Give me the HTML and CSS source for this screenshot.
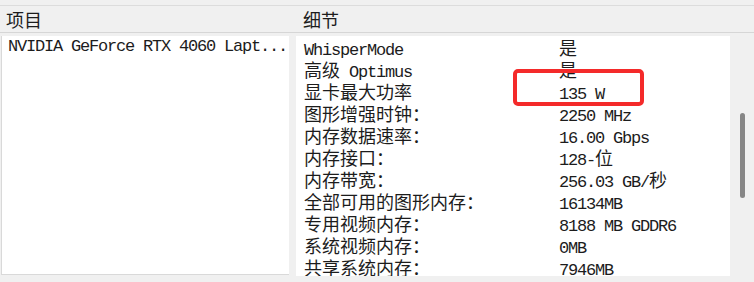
FILE: index.html
```html
<!DOCTYPE html>
<html lang="zh-CN">
<head>
    <meta charset="UTF-8">
    <title>显卡信息</title>
    <link rel="stylesheet" href="styles.css">
</head>
<body>
    <div class="window">
        <!-- Column headers -->
        <div class="top-strip"></div>
        <div class="header">
            <div class="header-item">项目</div>
            <div class="header-detail">细节</div>
        </div>

        <div class="panes">
            <!-- Item list -->
            <div class="pane-left">
                <div class="row"><span class="en">NVIDIA GeForce RTX 4060 Lapt...</span></div>
            </div>

            <!-- Details -->
            <div class="pane-right">
                <div class="row"><div class="label"><span class="en">WhisperMode</span></div><div class="value">是</div></div>
                <div class="row"><div class="label">高级<span class="en"> Optimus</span></div><div class="value">是</div></div>
                <div class="row"><div class="label">显卡最大功率</div><div class="value"><span class="en">135 W</span></div></div>
                <div class="row"><div class="label">图形增强时钟：</div><div class="value"><span class="en">2250 MHz</span></div></div>
                <div class="row"><div class="label">内存数据速率：</div><div class="value"><span class="en">16.00 Gbps</span></div></div>
                <div class="row"><div class="label">内存接口：</div><div class="value"><span class="en">128-</span>位</div></div>
                <div class="row"><div class="label">内存带宽：</div><div class="value"><span class="en">256.03 GB/</span>秒</div></div>
                <div class="row"><div class="label">全部可用的图形内存：</div><div class="value"><span class="en">16134MB</span></div></div>
                <div class="row"><div class="label">专用视频内存：</div><div class="value"><span class="en">8188 MB GDDR6</span></div></div>
                <div class="row"><div class="label">系统视频内存：</div><div class="value"><span class="en">0MB</span></div></div>
                <div class="row"><div class="label">共享系统内存：</div><div class="value"><span class="en">7946MB</span></div></div>
            </div>

            <!-- Scrollbar -->
            <div class="scrollbar">
                <div class="scroll-thumb"></div>
            </div>
        </div>

        <!-- Red highlight drawn over the list -->
        <div class="highlight"></div>
    </div>
</body>
</html>
```

FILE: styles.css
```css
body {
    margin: 0;
    padding: 0;
    background-color: #f0f0f0;
    font-family: "Noto Sans CJK SC", sans-serif;
    font-size: 18px;
    color: #1c1c1c;
}

.window {
    position: relative;
    width: 754px;
    height: 282px;
    overflow: hidden;
}

.top-strip {
    height: 5px;
    border-bottom: 1px solid #dcdcdc;
}

.header {
    display: flex;
    height: 26px;
    line-height: 26px;
    border-bottom: 1px solid #d6d6d6;
    background-color: #f0f0f0;
}

.header-item {
    width: 297px;
    padding-left: 6px;
    box-sizing: border-box;
}

.header-detail {
    padding-left: 6px;
}

.panes {
    display: flex;
    margin-top: 3px;
    height: 246px;
}

.pane-left {
    width: 288px;
    height: 239px;
    margin-left: 1px;
    padding-left: 6px;
    box-sizing: border-box;
    background-color: #fff;
    border-left: 1px solid #d9d9d9;
    border-bottom: 1px solid #d9d9d9;
}

.pane-right {
    width: 434px;
    height: 240px;
    margin-left: 7px;
    padding-left: 8px;
    box-sizing: border-box;
    background-color: #fff;
    overflow: hidden;
}

.row {
    display: flex;
    height: 22px;
    line-height: 22px;
    white-space: nowrap;
}

.label {
    width: 255px;
}

.en {
    font-family: "Liberation Mono", monospace;
    font-size: 17px;
    letter-spacing: -1.2px;
}

.scrollbar {
    width: 24px;
    padding-top: 77px;
    padding-left: 10px;
    box-sizing: border-box;
}

.scroll-thumb {
    width: 5px;
    height: 85px;
    border-radius: 3px;
    background-color: #868686;
}

.highlight {
    position: absolute;
    left: 513px;
    top: 69px;
    width: 131px;
    height: 37px;
    box-sizing: border-box;
    border: 4px solid #f42a2a;
    border-radius: 5px;
}
```
